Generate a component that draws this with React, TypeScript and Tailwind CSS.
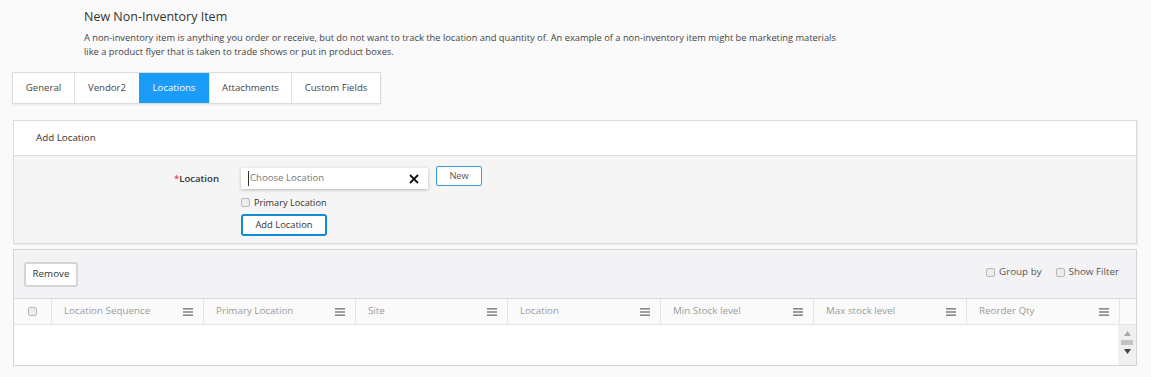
import React from "react"

const columns = [
  { label: "Location Sequence", w: "w-[152px]" },
  { label: "Primary Location", w: "w-[152px]" },
  { label: "Site", w: "w-[152px]" },
  { label: "Location", w: "w-[153px]" },
  { label: "Min Stock level", w: "w-[153px]" },
  { label: "Max stock level", w: "w-[153px]" },
  { label: "Reorder Qty", w: "w-[153px]" },
]

const tabs = [
  { label: "General", w: "w-[61px]" },
  { label: "Vendor2", w: "w-[65px]" },
  { label: "Locations", w: "w-[70px]", active: true },
  { label: "Attachments", w: "w-[82px]" },
  { label: "Custom Fields", w: "w-[89px]" },
]

function Box() {
  return (
    <span className="inline-block h-[9px] w-[9px] rounded-[2px] border border-[#b9b9b9] bg-[#ececec]" />
  )
}

function MenuIcon() {
  return (
    <svg width="10" height="8" viewBox="0 0 10 8" className="text-[#888]">
      <rect x="0" y="0" width="10" height="1.6" fill="currentColor" />
      <rect x="0" y="3.2" width="10" height="1.6" fill="currentColor" />
      <rect x="0" y="6.4" width="10" height="1.6" fill="currentColor" />
    </svg>
  )
}

export default function App() {
  return (
    <div className="h-[377px] w-[1151px] overflow-hidden bg-[#fafafa] font-['Open_Sans',sans-serif] text-[#333]">
      <div className="pl-[84px] pt-[8px]">
        <h1 className="text-[12.5px] leading-[18px] text-[#333]">New Non-Inventory Item</h1>
        <p className="mt-[5px] text-[9.3px] leading-[14px] text-[#444]">
          A non-inventory item is anything you order or receive, but do not want to track the location and quantity of. An example of a non-inventory item might be marketing materials
          <br />
          like a product flyer that is taken to trade shows or put in product boxes.
        </p>
      </div>

      <div className="ml-[12px] mt-[13px] inline-flex h-[32px] border border-[#dcdcdc] bg-white shadow-[0_1px_2px_rgba(0,0,0,0.08)]">
        {tabs.map((t, i) => (
          <div
            key={t.label}
            className={`${t.w} flex items-center justify-center text-[9.6px] ${
              t.active ? "bg-[#1a9cf8] text-white" : "text-[#444]"
            } ${i > 0 && !t.active ? "border-l border-[#e2e2e2]" : ""}`}
          >
            {t.label}
          </div>
        ))}
      </div>

      <div className="ml-[13px] mt-[16px] w-[1124px] border border-[#dcdcdc] shadow-[1px_1px_1px_rgba(0,0,0,0.06)]">
        <div className="flex h-[35px] items-center border-b border-[#dcdcdc] bg-white pl-[22px] text-[9.8px] text-[#333]">
          Add Location
        </div>
        <div className="flex h-[87px] bg-[#f5f5f5] pt-[12px]">
          <div className="w-[227px] pr-[22px] pt-[4px] text-right text-[9.6px] font-semibold text-[#333]">
            <span className="text-[#e0474c]">*</span>Location
          </div>
          <div className="flex flex-col">
            <div className="flex items-start">
              <div className="flex h-[21px] w-[187px] items-center justify-between bg-white pl-[7px] pr-[9px] shadow-[0_1px_3px_rgba(0,0,0,0.25)]">
                <span className="border-l border-[#333] pl-[1px] text-[9.6px] text-[#777]">Choose Location</span>
                <svg width="10" height="10" viewBox="0 0 10 10">
                  <path d="M1 1 L9 9 M9 1 L1 9" stroke="#111" strokeWidth="1.8" />
                </svg>
              </div>
              <button className="ml-[8px] mt-[-2px] h-[20px] w-[46px] rounded-[2px] border border-[#3a9ad9] bg-white text-[9.2px] text-[#555]">
                New
              </button>
            </div>
            <label className="mt-[7px] flex items-center gap-[4px] text-[9.2px] text-[#333]">
              <Box />
              Primary Location
            </label>
            <button className="mt-[4px] h-[22px] w-[86px] rounded-[3px] border-2 border-[#1589d6] bg-white text-[9.4px] text-[#333]">
              Add Location
            </button>
          </div>
        </div>
      </div>

      <div className="ml-[13px] mt-[5px] w-[1124px] border border-[#d4d4d4] bg-white">
        <div className="flex h-[49px] items-center justify-between border-b border-[#dcdcdc] bg-[#f3f3f5] pl-[10px] pr-[17px]">
          <button className="h-[25px] w-[54px] rounded-[3px] border-2 border-[#d5d5d5] bg-white text-[9.8px] text-[#333]">
            Remove
          </button>
          <div className="mt-[-4px] flex items-center gap-[14px] text-[9.8px] text-[#555]">
            <label className="flex items-center gap-[4px]">
              <Box />
              Group by
            </label>
            <label className="flex items-center gap-[4px]">
              <Box />
              Show Filter
            </label>
          </div>
        </div>
        <div className="flex h-[26px] border-b border-[#e4e4e4] bg-[#fafafa]">
          <div className="flex w-[38px] items-center justify-center border-r border-[#e4e4e4]">
            <Box />
          </div>
          {columns.map((c) => (
            <div
              key={c.label}
              className={`${c.w} flex items-center justify-between border-r border-[#e4e4e4] pl-[12px] pr-[10px] text-[9.8px] text-[#9a9a9a]`}
            >
              {c.label}
              <MenuIcon />
            </div>
          ))}
          <div className="flex-1" />
        </div>
        <div className="flex h-[40px]">
          <div className="flex-1" />
          <div className="flex w-[18px] flex-col items-center bg-[#f0f0f0] pt-[6px]">
            <svg width="7" height="5" viewBox="0 0 7 5">
              <path d="M0 5 L3.5 0 L7 5 Z" fill="#aaa" />
            </svg>
            <div className="mt-[4px] h-[5px] w-[12px] bg-[#c4c4c4]" />
            <svg width="7" height="5" viewBox="0 0 7 5" className="mt-[4px]">
              <path d="M0 0 L3.5 5 L7 0 Z" fill="#444" />
            </svg>
          </div>
        </div>
      </div>
    </div>
  )
}
